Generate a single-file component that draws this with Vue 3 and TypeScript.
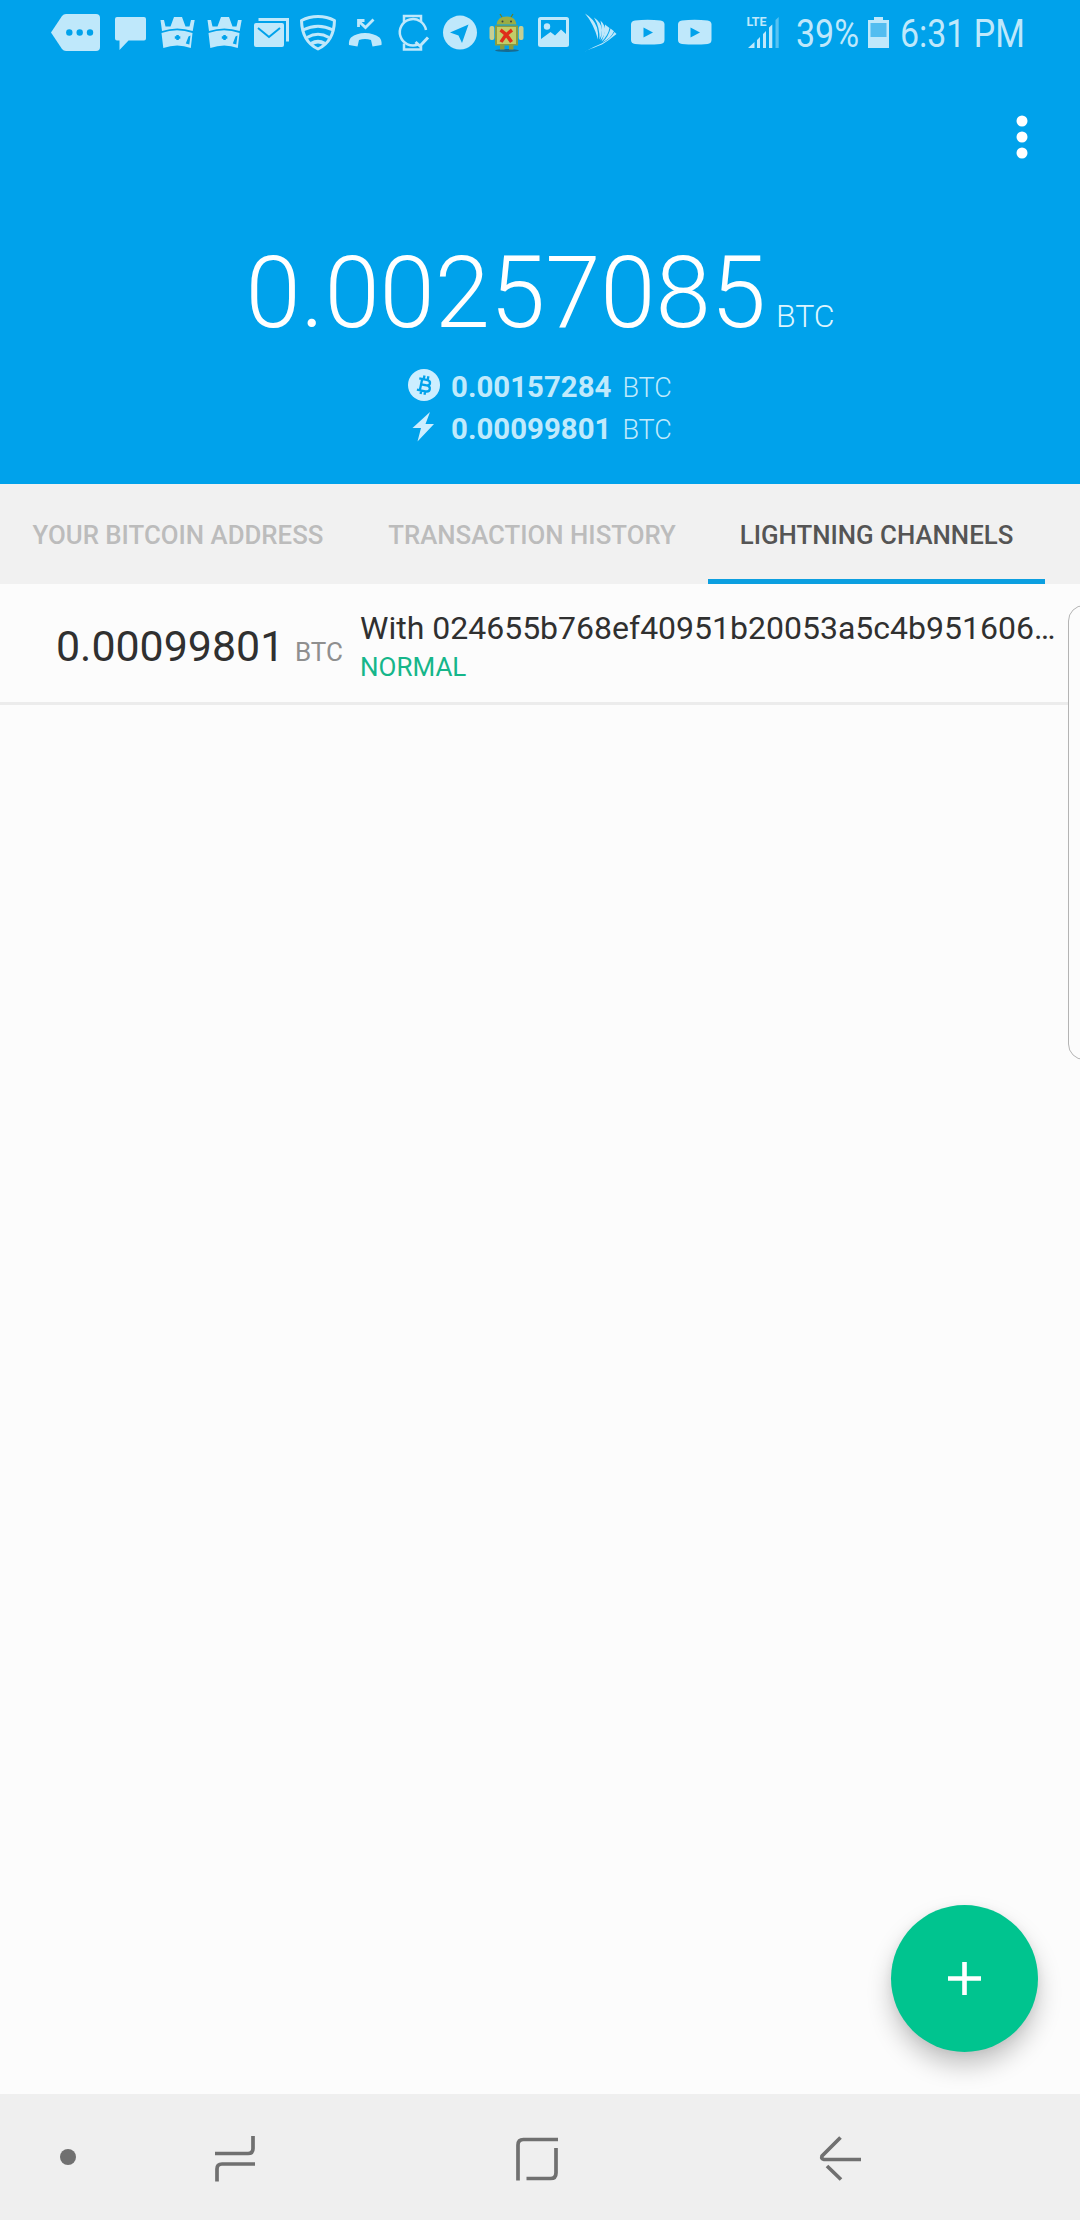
<script setup lang="ts">
interface Tab {
  label: string
  width: number
  active?: boolean
}

interface Balance {
  kind: 'chain' | 'lightning'
  amount: string
}

const tabs: Tab[] = [
  { label: 'YOUR BITCOIN ADDRESS', width: 356 },
  { label: 'TRANSACTION HISTORY', width: 352 },
  { label: 'LIGHTNING CHANNELS', width: 337, active: true },
]

const balances: Balance[] = [
  { kind: 'chain', amount: '0.00157284' },
  { kind: 'lightning', amount: '0.00099801' },
]
</script>

<template>
  <div class="screen">
    <header class="header">
      <div class="status">
        <svg class="more" viewBox="51 0 56 64"><path fill="currentColor" d="M62 16q1.500-2 4-2h30q4 0 4 4v29q0 4-4 4H66q-2.500 0-4-2L51 32.500z" /><g fill="#00a2eb"><circle cx="69.300" cy="32.500" r="3.200" /><circle cx="79.700" cy="32.500" r="3.200" /><circle cx="90" cy="32.500" r="3.200" /></g></svg>
        <svg class="ico" viewBox="107 0 47 64"><path fill="currentColor" d="M117 17h27q2 0 2 2v19.500q0 2-2 2h-15.500L119.500 50v-9.500H117q-2 0-2-2V19q0-2 2-2z" /></svg>
        <svg v-for="n in 2" :key="n" class="ico" viewBox="154 0 47 64">
          <path fill="currentColor" d="M160.500 20h3.500l1.500 6.500h5l3.500-9.500h8l3.500 9.500h4l1.500-6.500h3.700l-2 11q-15.500-5-30.700 0z" />
          <path fill="currentColor" d="M161.500 33q15.500-5.500 31 0l-1.700 15q-13.500-5-27.500 0z" />
          <path fill="#00a2eb" d="M176.300 35h2.500v1.300h1.500v2.400h-1.500v1.300h-2.500v-1.300h-1.500v-2.400h1.500zM188.500 36.500l2-1-1.200 9-3.500-1z" />
        </svg>
        <svg class="ico" viewBox="248 0 47 64"><path fill="none" stroke="currentColor" stroke-width="3" d="M260 21v-1.500h27.500v20.500H286" /><rect x="254" y="23" width="30" height="24" rx="2" fill="currentColor" /><path fill="none" stroke="#00a2eb" stroke-width="2" d="M258 28l11 9 11-9" /></svg>
        <svg class="ico" viewBox="295 0 47 64"><g fill="none" stroke="currentColor" stroke-linejoin="round"><path stroke-width="3" d="M318 16.500q9 0 16.500 4-.500 21-16.500 28.500-16-7.500-16.500-28.500 7.500-4 16.500-4z" /><path stroke-width="3" d="M303 30q15-7.500 30 0M307 37.500q11-6.500 22 0" /></g><path fill="currentColor" d="M310.500 42q7.500-4.500 15 0l-2 3q-5.500-3-11 0z" /></svg>
        <svg class="ico" viewBox="342 0 47 64"><path fill="currentColor" d="M349 45q-.500-5 2-7.500 5.500-4.500 14-4.500t14.500 4.500q2.500 2.500 2 7.500l-9 1.500-1.500-6.500q-6-2-12 0l-1.500 6.500z" /><path fill="none" stroke="currentColor" stroke-width="2.800" d="M358 20.500l7.500 7 8-8M358.500 27v-6.500h6" /></svg>
        <svg class="ico" viewBox="389 0 47 64"><g fill="none" stroke="currentColor" stroke-width="2.500"><path d="M404 22v-6h17v6M404 43.500v6h17v-4" /><path d="M426 30A13.200 13.200 0 1 0 418 44.500" /><path stroke-width="3" d="M415.500 42l4.500 4 8-8.500" /></g></svg>
        <svg class="ico" viewBox="436 0 47 64"><circle cx="460" cy="32.600" r="17" fill="currentColor" /><path fill="#00a2eb" d="M450 32.500l18.500-8-6.500 18.500-3.500-7.500z" /></svg>
        <svg class="ico" viewBox="483 0 47 64">
          <ellipse cx="507" cy="50.500" rx="12" ry="1.500" fill="#176b91" />
          <path stroke="#62802c" stroke-width="1.200" d="M500 14l2.500 4M513 14l-2.500 4" />
          <path fill="#9aad45" d="M496.500 24.500q1-8 10-8t10 8z" /><circle cx="502.500" cy="21.500" r="1" fill="#344" /><circle cx="511" cy="21.500" r="1" fill="#344" />
          <rect x="489.500" y="26" width="4.800" height="14" rx="2" fill="#c5cf94" /><rect x="518.700" y="26" width="4.800" height="14" rx="2" fill="#c5cf94" />
          <path fill="#8a9c40" d="M495 25.500h23v20h-4.500v4h-4.500v-4h-4.500v4H500v-4h-5z" /><rect x="497" y="27" width="19" height="17" fill="#c3cc68" />
          <path stroke="#df2f1a" stroke-width="3.500" d="M500.500 30q6 4 11 12M512 30q-7 5-11 12" fill="none" />
        </svg>
        <svg class="ico" viewBox="530 0 47 64"><rect x="538" y="17" width="31" height="30" rx="2.500" fill="currentColor" /><path fill="#00a2eb" d="M541 20h25v14l-5-4.500-6 6-4.500-3.500-9.500 7z" /><circle cx="547" cy="26.500" r="3.200" fill="currentColor" /></svg>
        <svg class="ico" viewBox="577 0 47 64"><g fill="currentColor"><path d="M585 13.500q9 5.500 12 14 1.500 5 1 12-4.500-16-13-26z" /><path d="M594 17.500q7.500 5 8 12.500 0 5-2.500 9.500.500-12-5.500-22z" /><path d="M600.500 20.500q5.500 5.500 4.500 11-.500 4-4.500 9 2.500-10 0-20z" /><path d="M605 24.500l4.500 3.500q-1.500 8-8 13.500 4-8 3.500-17z" /><path d="M610.500 28.500l3.500 2.700q-3.500 7.500-11.500 11 6-5.500 8-13.700z" /><path d="M614.500 32l2 2q-7 6-14.500 10.500Q585 51 585 51.500q8-4.500 16.500-8Q610 39.500 614.500 32z" /></g></svg>
        <svg v-for="n in 2" :key="'v' + n" class="ico" viewBox="624 0 47 64"><path fill="currentColor" d="M635 20.500q12.500-1.500 25.500 0 4 .500 4 4v15.500q0 3.500-4 4-12.500 1-25.500 0-4-.500-4-4V24.500q0-3.500 4-4z" /><path fill="#00a2eb" d="M643.500 27.500l9.500 5-9.500 5z" /></svg>
        <svg class="signal" viewBox="740 0 50 64"><text x="746.500" y="26" class="lte">LTE</text><g fill="currentColor"><path d="M748 48l6.500-6v6zM757 40l3-3v11h-3zM763 34l3-3v17h-3zM769 27.500l3.300-3V48H769z" /><path opacity=".45" d="M775.500 20l3.200-3v31h-3.200z" /></g></svg>
        <span class="pct"><span>39%</span></span>
        <svg class="battery" viewBox="867 0 21 64"><path fill="currentColor" d="M873 17h9v3h6v28h-21V20h6z" /><path fill="#52bdf0" d="M869.500 23h16v14h-16z" /></svg>
        <span class="clock"><span>6:31 PM</span></span>
      </div>
      <svg class="menu" viewBox="0 0 12 44" fill="#fff"><circle cx="6" cy="6" r="5.500" /><circle cx="6" cy="22" r="5.500" /><circle cx="6" cy="38" r="5.500" /></svg>
      <div class="total"><span class="total-num">0.00257085</span><span class="total-unit">BTC</span></div>
      <div v-for="b in balances" :key="b.kind" class="balance">
        <svg v-if="b.kind === 'chain'" class="bicon" viewBox="0 0 32 32"><circle cx="16" cy="16" r="16" fill="currentColor" /><g transform="rotate(12 16 16)" fill="none" stroke="#00a2eb" stroke-width="2.300"><path d="M10 10.500h7.500q4 0 4 2.700t-4 2.700H13h5.500q4 0 4 3t-4 3H10M13 10v12M14.500 6.500v4M18.500 6.500v4M14.500 22v3.500M18.500 22v3.500" /></g></svg>
        <svg v-else class="bicon" viewBox="0 0 32 32"><path fill="currentColor" d="M22 1L4.500 17h8.500l-3.500 13.500L26 13h-8.500z" /></svg>
        <b>{{ b.amount }}</b><span>BTC</span>
      </div>
    </header>

    <nav class="tabs">
      <div v-for="t in tabs" :key="t.label" class="tab" :class="{ active: t.active }" :style="{ width: t.width + 'px' }">{{ t.label }}</div>
    </nav>

    <main class="list">
      <div class="channel">
        <span class="amount">0.00099801</span><span class="unit">BTC</span>
        <div class="info">
          <div class="peer">With 024655b768ef40951b20053a5c4b951606…</div>
          <div class="state">NORMAL</div>
        </div>
      </div>
      <div class="edge"></div>
      <button class="fab" aria-label="Add"><svg viewBox="0 0 33 33" width="33" height="33"><path d="M16.500 0v33M0 16.500h33" stroke="#fff" stroke-width="4.600" /></svg></button>
    </main>

    <footer class="navbar">
      <svg class="dot" viewBox="0 0 16 16"><circle cx="8" cy="8" r="8" fill="#707070" /></svg>
      <svg class="key recents" viewBox="0 0 48 48"><path d="M42 1v12.500q0 5-5 5H4M6 46.500V34q0-5 5-5h33" /></svg>
      <svg class="key home" viewBox="0 0 48 48"><path d="M5 45.500V10q0-5.500 5.500-5.500H45M43 13v25q0 5.500-5.500 5.500H13.500" /></svg>
      <svg class="key back" viewBox="0 0 48 48"><path d="M24.500 2.500L6 21q-1 3 2 3.500h37M11 31l14 13.500" /></svg>
    </footer>
  </div>
</template>

<style>
body { margin: 0; }
</style>

<style scoped>
.screen { width: 1080px; height: 2220px; display: flex; flex-direction: column; overflow: hidden; background: #fcfcfc; font-family: Roboto, "Liberation Sans", sans-serif; }
svg { display: block; flex: none; }
.header { height: 484px; background: #00a2eb; color: #c0eafc; display: flex; flex-direction: column; align-items: center; flex: none; }
.status { width: 1080px; height: 64px; display: flex; box-sizing: border-box; padding-left: 51px; color: #bfe8fb; }
.more { width: 56px; height: 64px; }
.ico { width: 47px; height: 64px; }
.signal { width: 50px; height: 64px; margin-left: 22px; }
.lte { font: 700 12.5px Roboto, sans-serif; fill: currentColor; }
.pct, .clock { flex: none; font-size: 39px; line-height: 64px; white-space: nowrap; padding-top: 2px; box-sizing: border-box; height: 64px; }
.pct span, .clock span { display: inline-block; transform: scaleX(.87); transform-origin: 0 0; }
.pct { width: 78px; padding-left: 6px; box-sizing: border-box; }
.battery { width: 21px; height: 64px; }
.clock { margin-left: 10.500px; width: 150px; }
.menu { width: 12px; height: 44px; align-self: flex-end; margin: 50.500px 51.700px 0 0; }
.total { margin-top: 84.500px; height: 100px; line-height: 100px; display: flex; align-items: baseline; color: #fff; font-weight: 300; white-space: nowrap; }
.total-num { font-size: 99.5px; }
.total-unit { font-size: 32px; margin-left: 10px; color: #dcf5ff; }
.header .total + .balance { margin-top: 23px; }
.balance { height: 42px; line-height: 43px; display: flex; font-size: 29.4px; white-space: nowrap; }
.bicon { width: 32px; height: 32px; margin: 3px 11px 0 0; color: #cdeeff; }
.balance span { font-size: 27px; font-weight: 300; margin-left: 11px; padding-top: 1px; }
.tabs { height: 100px; background: #f1f1f1; display: flex; flex: none; }
.tab { box-sizing: border-box; height: 100px; line-height: 103px; text-align: center; font-size: 25.8px; font-weight: 500; color: #bcbcbc; white-space: nowrap; }
.tab.active { color: #555; border-bottom: 5px solid #0c9fe0; }
.list { flex: 1; position: relative; }
.channel { height: 121px; box-sizing: border-box; border-bottom: 3px solid #ececec; display: flex; align-items: flex-start; color: #303030; white-space: nowrap; padding-left: 56px; }
.amount { font-size: 42.9px; line-height: 50px; margin-top: 37px; width: 239px; }
.unit { font-size: 26px; line-height: 40px; margin-top: 48px; width: 65px; color: #8f8f8f; }
.peer { font-size: 32px; line-height: 40px; margin-top: 24px; }
.state { font-size: 26px; line-height: 32px; margin-top: 2.500px; color: #16b68a; }
.edge { position: absolute; right: -30px; top: 21px; width: 42px; height: 455px; box-sizing: border-box; border: 1.500px solid #b4b4b4; border-radius: 16px; background: #fcfcfc; }
.fab { position: absolute; right: 42px; bottom: 42px; width: 147px; height: 147px; padding: 0; border: 0; border-radius: 50%; background: #00c48f; display: flex; align-items: center; justify-content: center; box-shadow: 0 14px 24px rgba(0, 0, 0, .22), 0 2px 10px rgba(0, 0, 0, .06); }
.navbar { height: 126px; background: #efefef; display: flex; flex: none; position: relative; z-index: 1; }
.dot { width: 16px; height: 16px; margin: 55px 0 0 60px; }
.key { width: 48px; height: 48px; margin-top: 41px; fill: none; stroke: #707070; stroke-width: 3.7; }
.recents { margin-left: 135px; }
.home { margin-left: 254px; }
.back { margin-left: 255px; }
</style>
